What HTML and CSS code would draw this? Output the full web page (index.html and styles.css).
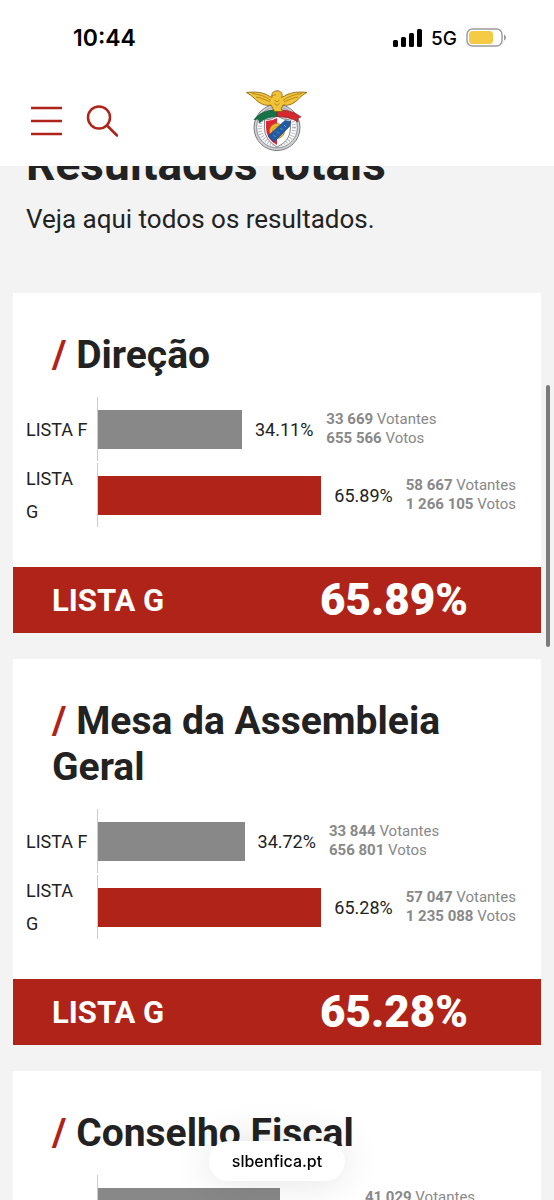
FILE: index.html
```html
<!DOCTYPE html>
<html lang="pt">
<head>
  <meta charset="UTF-8" />
  <meta name="viewport" content="width=device-width, initial-scale=1.0"/>
  <title>Resultados totais</title>
  <link rel="stylesheet" href="styles.css">
</head>
<body>

  <header class="top">
    <div class="status-bar">
      <span class="clock">10:44</span>
      <div class="status-icons">
        <svg width="29" height="18" viewBox="0 0 29 18">
          <rect x="0" y="11" width="5" height="7" rx="1.5"/>
          <rect x="8" y="8" width="5" height="10" rx="1.5"/>
          <rect x="16" y="4" width="5" height="14" rx="1.5"/>
          <rect x="24" y="0" width="5" height="18" rx="1.5"/>
        </svg>
        <span class="network">5G</span>
        <svg width="40" height="20" viewBox="0 0 40 20">
          <rect x="1" y="1" width="35" height="17" rx="5.5" fill="#fff" stroke="#9a9a9c" stroke-width="1.4"/>
          <rect x="3" y="3" width="24" height="13" rx="3.5" fill="#f5ca45"/>
          <path d="M38 6.5c2.6 1 2.6 5 0 6z" fill="#9a9a9c"/>
        </svg>
      </div>
    </div>

    <nav class="nav-bar">
      <div class="nav-buttons">
        <button type="button" class="icon-btn" aria-label="Menu">
          <svg width="32" height="32" viewBox="0 0 32 32">
            <path d="M1 3h31M1 16h31M1 29h31" stroke="#b02318" stroke-width="2.6"/>
          </svg>
        </button>
        <button type="button" class="icon-btn" aria-label="Pesquisar">
          <svg width="32" height="32" viewBox="0 0 32 32" fill="none" stroke="#b02318" stroke-width="2.5" stroke-linecap="round">
            <circle cx="13" cy="12.500" r="11"/>
            <path d="M21 20.500L31 30.500"/>
          </svg>
        </button>
      </div>
      <a class="logo" href="#" aria-label="SL Benfica">
        <svg width="62" height="62" viewBox="0 0 62 62">
          <!-- wheel -->
          <circle cx="31" cy="37.5" r="23" fill="#d3d4d8" stroke="#77797e"/>
          <circle cx="31" cy="37.5" r="20.5" fill="none" stroke="#96989d"/>
          <circle cx="31" cy="37.5" r="16.5" fill="none" stroke="#fff" stroke-width="6"/>
          <circle cx="31" cy="37.5" r="17" fill="none" stroke="#b4b6ba" stroke-width="4" stroke-dasharray="1 1.7"/>
          <!-- shield -->
          <path d="M18.500 30q7 0 12.500-4q6 4 13.500 4v8q0 13-13.500 19q-12.500-7-12.500-19z" fill="#fff" stroke="#85868b"/>
          <path d="M20 31q6 0 11-3v27q-11-6-11-17z" fill="#dd2735"/>
          <circle cx="31" cy="41" r="7.5" fill="#f0bb2f" stroke="#a47a1c" stroke-width=".7"/>
          <circle cx="31" cy="41" r="4.5" fill="none" stroke="#b98a22" stroke-width=".7"/>
          <path d="M22 46L39 30.500l5.500 1-1 5L28 52z" fill="#215ba5" stroke="#173f78" stroke-width=".6"/>
          <path d="M27.500 45l2 2M31 41.500l2 2M34.500 38l2 2M38 35l2 2" stroke="#6f9dcc"/>
          <!-- ribbon -->
          <path d="M31 19.500C20 20 14 23 8 29.500l4.500-.5 1 4c5-5 10-6 17.500-6.500z" fill="#167346" stroke="#0d4a2c" stroke-width=".6"/>
          <path d="M31 19.500c10 .5 17 2 24 7.500l-3.500 1.500.5 3.500c-6-4-13-5-21-5.500z" fill="#d42730" stroke="#8b141c" stroke-width=".6"/>
          <!-- eagle -->
          <path d="M28 20.500l-3-5.500C17 17 11 11 8 8 6 6 3 4 .5 2.500 9 1.500 17 2 23 6l3 1.500C25 4 27 .8 31 .8s6.500 3 4.500 6.700l3-1.500C45 2 53 1.500 61 2.500c-4 2-6 4-8 6-4 4-9 8-16 6.500l-2 4 2 2.500h-9z" fill="#f2c335" stroke="#805c16" stroke-width=".8"/>
          <path d="M6 3.500c8 1 14 3 19 7M10 7c6 1 10 3 14 5M56 3.500c-8 1-14 3-19 7M52 7c-6 1-10 3-14 5M28.500 10l2.500 2 2.500-2M28.500 13.500l2.500 2 2.500-2M30 4.500l-4 1.500" fill="none" stroke="#a67c1e" stroke-width=".8"/>
        </svg>
      </a>
    </nav>
  </header>

  <main class="page">
    <div class="intro">
      <h1>Resultados totais</h1>
      <p>Veja aqui todos os resultados.</p>
    </div>

    <section class="card">
      <h2><span class="slash">/</span> Direção</h2>
      <div class="chart">
        <div class="row">
          <span class="label">LISTA F</span>
          <div class="track">
            <div class="bar" style="width: 34.11%"></div>
            <span class="percent">34.11%</span>
            <p class="votes"><b>33 669</b> Votantes<br><b>655 566</b> Votos</p>
          </div>
        </div>
        <div class="row">
          <span class="label">LISTA G</span>
          <div class="track">
            <div class="bar winner" style="width: 65.89%"></div>
            <span class="percent">65.89%</span>
            <p class="votes"><b>58 667</b> Votantes<br><b>1 266 105</b> Votos</p>
          </div>
        </div>
      </div>
      <div class="result">
        <span class="result-name">LISTA G</span>
        <strong class="result-percent">65.89%</strong>
      </div>
    </section>

    <section class="card">
      <h2><span class="slash">/</span> Mesa da Assembleia Geral</h2>
      <div class="chart">
        <div class="row">
          <span class="label">LISTA F</span>
          <div class="track">
            <div class="bar" style="width: 34.72%"></div>
            <span class="percent">34.72%</span>
            <p class="votes"><b>33 844</b> Votantes<br><b>656 801</b> Votos</p>
          </div>
        </div>
        <div class="row">
          <span class="label">LISTA G</span>
          <div class="track">
            <div class="bar winner" style="width: 65.28%"></div>
            <span class="percent">65.28%</span>
            <p class="votes"><b>57 047</b> Votantes<br><b>1 235 088</b> Votos</p>
          </div>
        </div>
      </div>
      <div class="result">
        <span class="result-name">LISTA G</span>
        <strong class="result-percent">65.28%</strong>
      </div>
    </section>

    <section class="card">
      <h2><span class="slash">/</span> Conselho Fiscal</h2>
      <div class="chart">
        <div class="row">
          <span class="label">LISTA F</span>
          <div class="track">
            <div class="bar" style="width: 43.24%"></div>
            <span class="percent">43.24%</span>
            <p class="votes"><b>41 029</b> Votantes<br>&nbsp;</p>
          </div>
        </div>
      </div>
    </section>
  </main>

  <div class="scroll-thumb"></div>
  <div class="address">slbenfica.pt</div>

</body>
</html>
```
FILE: styles.css
```css
* {
  box-sizing: border-box;
}

body {
  margin: 0;
  height: 100vh;
  overflow: hidden;
  font-family: Roboto, sans-serif;
  background: #f3f3f3;
  color: #222;
}

h1, h2, p {
  margin: 0;
}

/* status bar + menu */
.top {
  position: fixed;
  top: 0;
  left: 0;
  right: 0;
  z-index: 2;
  background: #fff;
}

.status-bar {
  display: flex;
  justify-content: space-between;
  align-items: center;
  height: 76px;
  padding: 0 48px 0 73px;
  font-family: Inter, sans-serif;
  color: #000;
}

.clock {
  font-size: 23px;
  font-weight: 600;
}

.status-icons {
  display: flex;
  align-items: center;
  gap: 9px;
}

.network {
  font-size: 19px;
  font-weight: 500;
}

.nav-bar {
  display: grid;
  grid-template-columns: 1fr auto 1fr;
  align-items: center;
  height: 90px;
  padding: 0 30px;
}

.nav-buttons {
  display: flex;
  gap: 24px;
}

.icon-btn {
  padding: 0;
  border: none;
  background: none;
  cursor: pointer;
}

.icon-btn svg,
.logo svg {
  display: block;
}

/* content */
.page {
  padding: 136px 13px 0;
}

.intro {
  padding: 0 13px 54px;
}

h1 {
  font-size: 46px;
  line-height: 56px;
  font-weight: bold;
}

.intro p {
  font-size: 26px;
  line-height: 39px;
  padding-top: 8px;
}

.card {
  margin-bottom: 26px;
  background: #fff;
}

h2 {
  padding: 39px 39px 18px;
  font-size: 39px;
  line-height: 46px;
  font-weight: bold;
}

.slash {
  color: #b02318;
}

.chart {
  padding: 0 21px 39px 13px;
}

.row {
  display: flex;
  align-items: center;
  height: 66px;
}

.label {
  flex: 0 0 71px;
  padding-right: 8px;
  font-size: 18px;
  line-height: 33px;
}

.track {
  flex: 1;
  display: flex;
  align-items: center;
  height: 64px;
  border-left: 1px solid #ccc;
}

.bar {
  height: 39px;
  background: #888;
}

.winner {
  background: #b02318;
}

.percent {
  margin: 0 13px;
  font-size: 18px;
}

.votes {
  padding-right: 4px;
  font-size: 15px;
  line-height: 19px;
  color: #888;
  white-space: nowrap;
}

.result {
  display: flex;
  justify-content: space-between;
  align-items: center;
  height: 66px;
  padding: 0 73px 0 39px;
  background: #b02318;
  color: #fff;
  font-weight: bold;
}

.result-name {
  font-size: 31px;
}

.result-percent {
  font-size: 44px;
}

.scroll-thumb {
  position: fixed;
  top: 385px;
  right: 4px;
  width: 4px;
  height: 262px;
  border-radius: 2px;
  background: #7b7b7b;
}

/* browser address pill */
.address {
  position: fixed;
  bottom: 19px;
  left: 50%;
  z-index: 3;
  transform: translateX(-50%);
  padding: 0 23px;
  border-radius: 20px;
  background: #fff;
  box-shadow: 0 0 40px rgba(0, 0, 0, 0.12);
  font-family: Inter, sans-serif;
  font-size: 16px;
  line-height: 40px;
  font-weight: 500;
  color: #000;
}
```
